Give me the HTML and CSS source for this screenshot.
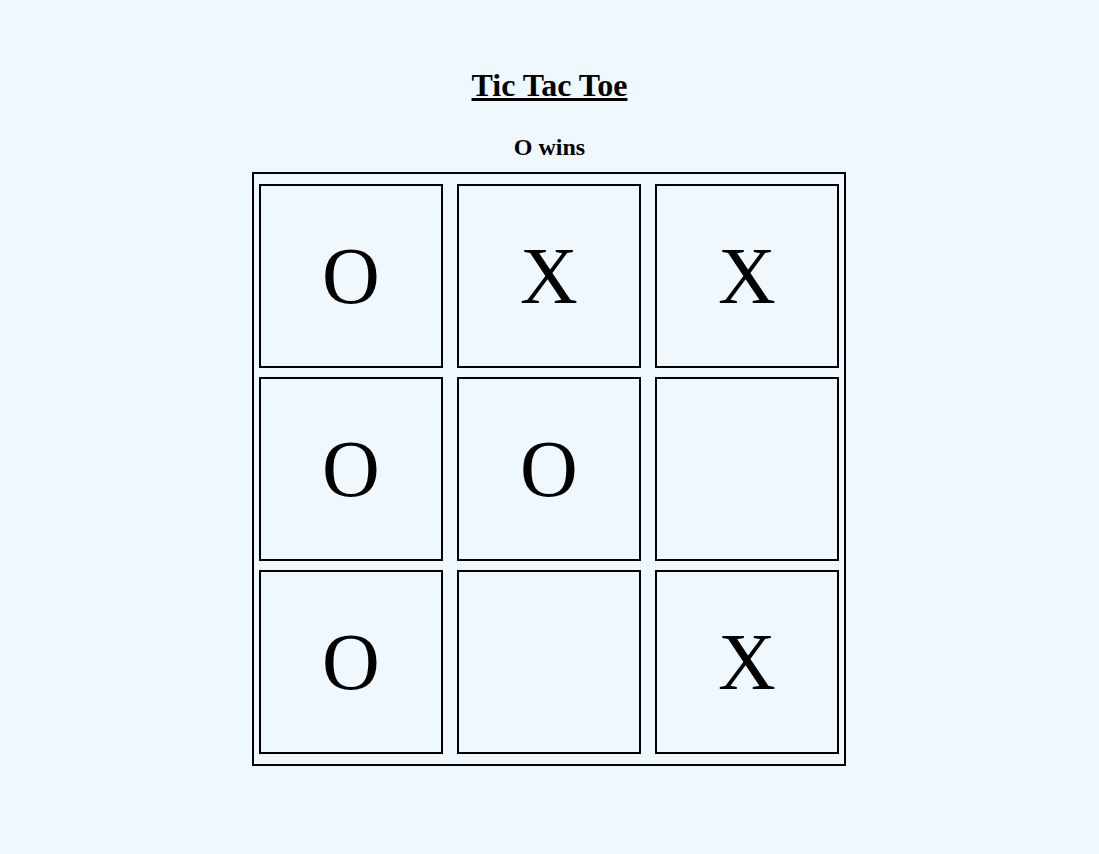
FILE: index.html
```html
<!DOCTYPE html>
<html lang="en">
<head>
<meta charset="utf-8">
<title>Tic Tac Toe</title>
<link rel="stylesheet" href="styles.css">
</head>
<body>
<main class="game">
  <h1 class="title">Tic Tac Toe</h1>
  <h2 class="status">O wins</h2>
  <div class="board">
    <div class="cell">O</div>
    <div class="cell">X</div>
    <div class="cell">X</div>
    <div class="cell">O</div>
    <div class="cell">O</div>
    <div class="cell"></div>
    <div class="cell">O</div>
    <div class="cell"></div>
    <div class="cell">X</div>
  </div>
</main>
</body>
</html>
```

FILE: styles.css
```css
html, body {
  margin: 0;
  padding: 0;
  background: #f0f8ff;
}

body {
  font-family: "Liberation Serif", "Times New Roman", serif;
  color: #000;
}

.game {
  display: flex;
  flex-direction: column;
  align-items: center;
  padding-top: 67px;
}

.title {
  margin: 0;
  font-size: 32px;
  font-weight: bold;
  text-decoration: underline;
  line-height: normal;
}

.status {
  margin: 30px 0 11px;
  font-size: 24px;
  font-weight: bold;
  line-height: normal;
}

.board {
  display: grid;
  grid-template-columns: repeat(3, 184px);
  grid-auto-rows: 184px;
  column-gap: 14px;
  row-gap: 9px;
  padding: 10px 5px;
  margin-right: 1px;
  border: 2px solid #000;
}

.cell {
  box-sizing: border-box;
  border: 2px solid #000;
  display: flex;
  align-items: center;
  justify-content: center;
  font-size: 80px;
  line-height: normal;
}
```
